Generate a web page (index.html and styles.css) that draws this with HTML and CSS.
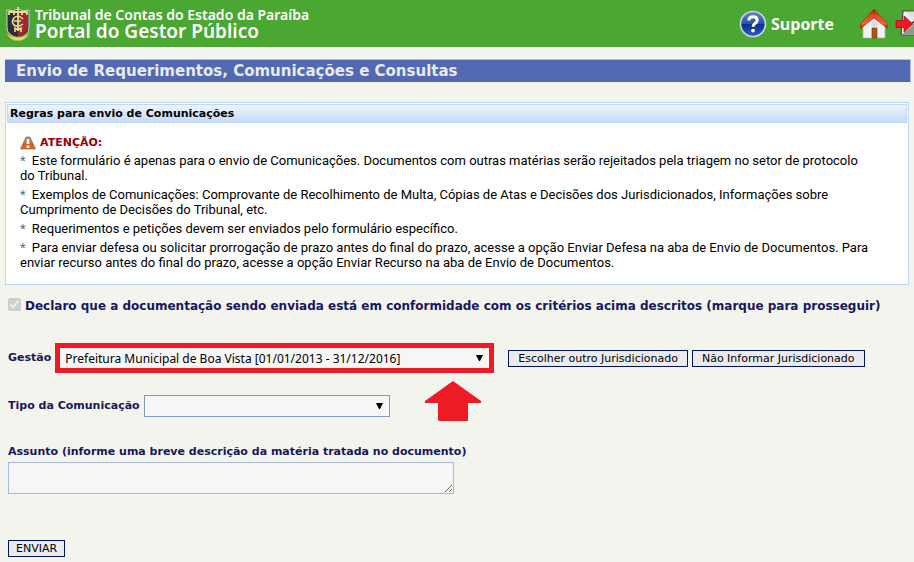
FILE: index.html
```html
<!DOCTYPE html>
<html lang="pt-BR">
<head>
    <meta charset="UTF-8">
    <meta name="viewport" content="width=device-width, initial-scale=1.0">
    <title>Portal do Gestor Público</title>
    <link rel="stylesheet" href="styles.css">
</head>
<body>
    <header class="topbar">
        <svg class="crest" viewBox="0 0 24 34" aria-hidden="true">
            <path d="M1 3Q7 5 12 2Q17 5 23 3V21Q23 28 12 31Q1 28 1 21Z" fill="#2b2d3c" stroke="#d6d3bd"/>
            <path d="M12 3Q17 5 22 4V21Q21 27 12 30Z" fill="#9c2a33"/>
            <path d="M3 8V5H21V8M12 0V24M8 5V8M16 5V8" fill="none" stroke="#ecd98a" stroke-width="1.8"/>
            <path d="M17 12Q12 7 8 11Q5 15 8 18Q12 21 17 17M8 14H15M9 25V21L12 23L15 21V25" fill="none" stroke="#f0dc86" stroke-width="1.6"/>
            <path d="M0 25Q3 30 12 30Q21 30 24 25L22 29Q18 34 12 34Q6 34 2 29Z" fill="#e3da6c" stroke="#8b9a35" stroke-width=".6"/>
        </svg>
        <div class="brand">
            <span class="court">Tribunal de Contas do Estado da Paraíba</span>
            <span class="portal">Portal do Gestor Público</span>
        </div>
        <nav class="tools">
            <a href="#" class="support">
                <svg width="28" height="28" viewBox="0 0 28 28" aria-hidden="true">
                    <defs>
                        <linearGradient id="blue" x2="0" y2="1">
                            <stop offset="0" stop-color="#6785cf"/>
                            <stop offset=".5" stop-color="#2850aa"/>
                            <stop offset=".52" stop-color="#0a2f8c"/>
                            <stop offset="1" stop-color="#2b62c2"/>
                        </linearGradient>
                    </defs>
                    <circle cx="14" cy="14" r="12.5" fill="url(#blue)" stroke="#cbd3dc" stroke-width="1.6"/>
                    <path d="M9.8 10.5Q10 6.8 14 6.8Q18.2 6.8 18.2 10.3Q18.2 12.2 16 13.5Q14.1 14.6 14.1 16.8" fill="none" stroke="#fff" stroke-width="3"/>
                    <circle cx="14" cy="20.6" r="1.9" fill="#fff"/>
                </svg>
                Suporte
            </a>
            <a href="#" class="home" aria-label="Início">
                <svg width="28" height="32" viewBox="0 0 28 32" aria-hidden="true">
                    <defs>
                        <linearGradient id="roof" x2="0" y2="1">
                            <stop offset="0" stop-color="#8e2208"/>
                            <stop offset=".35" stop-color="#d9501f"/>
                            <stop offset=".75" stop-color="#ef6539"/>
                            <stop offset="1" stop-color="#a51e08"/>
                        </linearGradient>
                    </defs>
                    <path d="M3 17L14 8L25 17V30H3Z" fill="#f1f1ef" stroke="#aaa" stroke-width=".7"/>
                    <path d="M14 1L27.5 16V20.5L14 10L.5 20.5V16Z" fill="url(#roof)" stroke="#a42a10" stroke-width=".6"/>
                    <path d="M12 20H17V30H12Z" fill="#a85723" stroke="#6e3411" stroke-width=".6"/>
                    <path d="M12 14H17V18H12ZM14.5 14V18M12 16H17" fill="#fff" stroke="#bbb" stroke-width=".6"/>
                </svg>
            </a>
            <a href="#" class="exit" aria-label="Sair">
                <svg width="34" height="32" viewBox="0 0 34 32" aria-hidden="true">
                    <path d="M8 3H33L31 27H6Z" fill="#f4f4f4" stroke="#444" stroke-width="1.2"/>
                    <path d="M11 4H32V13L20 15Z" fill="#dfe1de"/>
                    <path d="M7 26L16 19L21 14L32 10V26Z" fill="#8c9c86"/>
                    <path d="M17 15L22 12" stroke="#333" stroke-width="1.5"/>
                    <path d="M1 12.5H9V8L18 16L9 24V19.5H1Z" fill="#e81c24" stroke="#b90d14" stroke-width=".8"/>
                </svg>
            </a>
        </nav>
    </header>

    <h1 class="page-title">Envio de Requerimentos, Comunicações e Consultas</h1>

    <section class="panel">
        <h2>Regras para envio de Comunicações</h2>
        <div class="rules">
            <p class="warning">
                <svg width="16" height="14" viewBox="0 0 16 14" aria-hidden="true">
                    <path d="M6 1H10L15.5 13H.5Z" fill="#d9651d" stroke="#8a6b5b" stroke-width=".7"/>
                    <path d="M6 1H10L12 6H4Z" fill="#a98677"/>
                    <path d="M7 3H9L9.5 8H6.5ZM6.5 9.5H9.5V12H6.5Z" fill="#fff"/>
                </svg>
                ATENÇÃO:
            </p>
            <p><span class="star">*</span> Este formulário é apenas para o envio de Comunicações. Documentos com outras matérias serão rejeitados pela triagem no setor de protocolo<br> do Tribunal.</p>
            <p><span class="star">*</span> Exemplos de Comunicações: Comprovante de Recolhimento de Multa, Cópias de Atas e Decisões dos Jurisdicionados, Informações sobre<br> Cumprimento de Decisões do Tribunal, etc.</p>
            <p><span class="star">*</span> Requerimentos e petições devem ser enviados pelo formulário específico.</p>
            <p><span class="star">*</span> Para enviar defesa ou solicitar prorrogação de prazo antes do final do prazo, acesse a opção Enviar Defesa na aba de Envio de Documentos. Para<br> enviar recurso antes do final do prazo, acesse a opção Enviar Recurso na aba de Envio de Documentos.</p>
        </div>
    </section>

    <form class="form">
        <div class="agree">
            <input type="checkbox" id="declaro" checked disabled>
            <label for="declaro">Declaro que a documentação sendo enviada está em conformidade com os critérios acima descritos (marque para prosseguir)</label>
        </div>

        <div class="row">
            <label for="gestao">Gestão</label>
            <div class="highlight">
                <select id="gestao">
                    <option>Prefeitura Municipal de Boa Vista [01/01/2013 - 31/12/2016]</option>
                </select>
                <svg class="pointer" width="56" height="40" viewBox="0 0 56 40" aria-hidden="true">
                    <path d="M28 0L56 20V22H43V40H14L13 39V22H0V20Z" fill="#ed1c24"/>
                </svg>
            </div>
            <div class="actions">
                <button type="button">Escolher outro Jurisdicionado</button>
                <button type="button">Não Informar Jurisdicionado</button>
            </div>
        </div>

        <div class="row">
            <label for="tipo">Tipo da Comunicação</label>
            <select id="tipo" class="type">
                <option></option>
            </select>
        </div>

        <div class="subject">
            <label for="assunto">Assunto (informe uma breve descrição da matéria tratada no documento)</label>
            <textarea id="assunto"></textarea>
        </div>

        <button type="submit" class="send">ENVIAR</button>
    </form>
</body>
</html>
```
FILE: styles.css
```css
* {
    box-sizing: border-box;
}
body {
    margin: 0;
    background-color: #f4f4ef;
    color: #000;
    font-family: Roboto, sans-serif;
    font-size: 13px;
}
.topbar {
    display: flex;
    align-items: center;
    height: 47px;
    padding-left: 6px;
    background-color: #4aa832;
    color: #fff;
    overflow: hidden;
}
.crest {
    width: 24px;
    height: 34px;
    flex: none;
}
.brand {
    margin-left: 5px;
    font-family: 'Noto Sans', sans-serif;
    font-weight: 600;
    white-space: nowrap;
}
.court,
.portal {
    display: block;
}
.court {
    font-size: 14px;
    line-height: 14px;
}
.portal {
    font-size: 19px;
    line-height: 18px;
}
.tools {
    display: flex;
    align-items: center;
    margin-left: auto;
    margin-right: -15px;
}
.tools a {
    display: flex;
    align-items: center;
    color: #fff;
    text-decoration: none;
}
.tools .support {
    gap: 4px;
    font-family: 'Open Sans', sans-serif;
    font-size: 16px;
    font-weight: bold;
}
.tools .home {
    margin-left: 26px;
}
.tools .exit {
    margin-left: 7px;
}
.page-title {
    margin: 12px 3px 20px 5px;
    padding-left: 11px;
    border: 1px solid #b3bcdc;
    border-width: 1px 1px 0 0;
    background-color: #5069b2;
    color: #e8ebf5;
    font: bold 15px/22px 'DejaVu Sans', sans-serif;
}
.panel {
    margin: 0 5px;
    padding: 1px;
    border: 1px solid #bed6f8;
    background-color: #fff;
}
.panel h2 {
    margin: 0;
    padding-left: 2px;
    border: 1px solid #bed6f8;
    background: linear-gradient(#f0f5fd, #c5daf8);
    font: bold 11px/17px 'DejaVu Sans', sans-serif;
}
.rules {
    padding: 12px 13px 9px;
    line-height: 15px;
}
.rules p {
    margin: 0 0 4px;
}
.rules .warning {
    display: flex;
    align-items: center;
    gap: 4px;
    margin-bottom: 2px;
    color: #9c0006;
    font: bold 11px/16px 'DejaVu Sans', sans-serif;
}
.star {
    margin-right: 3px;
    color: #55718c;
}
.form {
    padding: 13px 8px 5px;
    color: #17175c;
}
.form label {
    font: bold 11px/16px 'DejaVu Sans', sans-serif;
    white-space: nowrap;
}
.form .agree label {
    font-size: 12px;
}
.agree {
    display: flex;
    align-items: flex-start;
    gap: 4px;
    margin-bottom: 29px;
}
.agree input {
    width: 13px;
    height: 13px;
    margin: 0;
}
.row {
    display: flex;
    align-items: center;
    gap: 4px;
    margin-bottom: 22px;
}
.highlight {
    position: relative;
    width: 439px;
    border: 5px solid #ed1c24;
}
.pointer {
    position: absolute;
    top: 33px;
    right: 8px;
}
select {
    appearance: none;
    display: block;
    width: 100%;
    height: 20px;
    padding: 0 20px 0 5px;
    border: 0;
    border-radius: 0;
    background: #f6f6f6 url("data:image/svg+xml,%3Csvg xmlns='http://www.w3.org/2000/svg' width='7' height='6'%3E%3Cpath d='M0 0H7L4 6H3Z'/%3E%3C/svg%3E") no-repeat right 6px center;
    color: #000;
    font: 12px 'Noto Sans', sans-serif;
}
select.type {
    width: 246px;
    height: 22px;
    border: 1px solid #7f9db9;
}
.actions {
    display: flex;
    gap: 4px;
    margin-left: 10px;
}
button {
    height: 17px;
    padding: 0 9px;
    border: 1px solid #00135c;
    border-radius: 0;
    background-color: #ebebef;
    color: #000;
    font: 11px/15px 'DejaVu Sans', sans-serif;
    white-space: nowrap;
}
.send {
    padding: 0 7px;
}
.subject {
    margin: 27px 0 46px;
}
.subject label {
    display: block;
    margin-bottom: 2px;
}
textarea {
    display: block;
    width: 446px;
    height: 32px;
    border: 1px solid #a9b8df;
    background-color: #f6f6f6;
}
```
